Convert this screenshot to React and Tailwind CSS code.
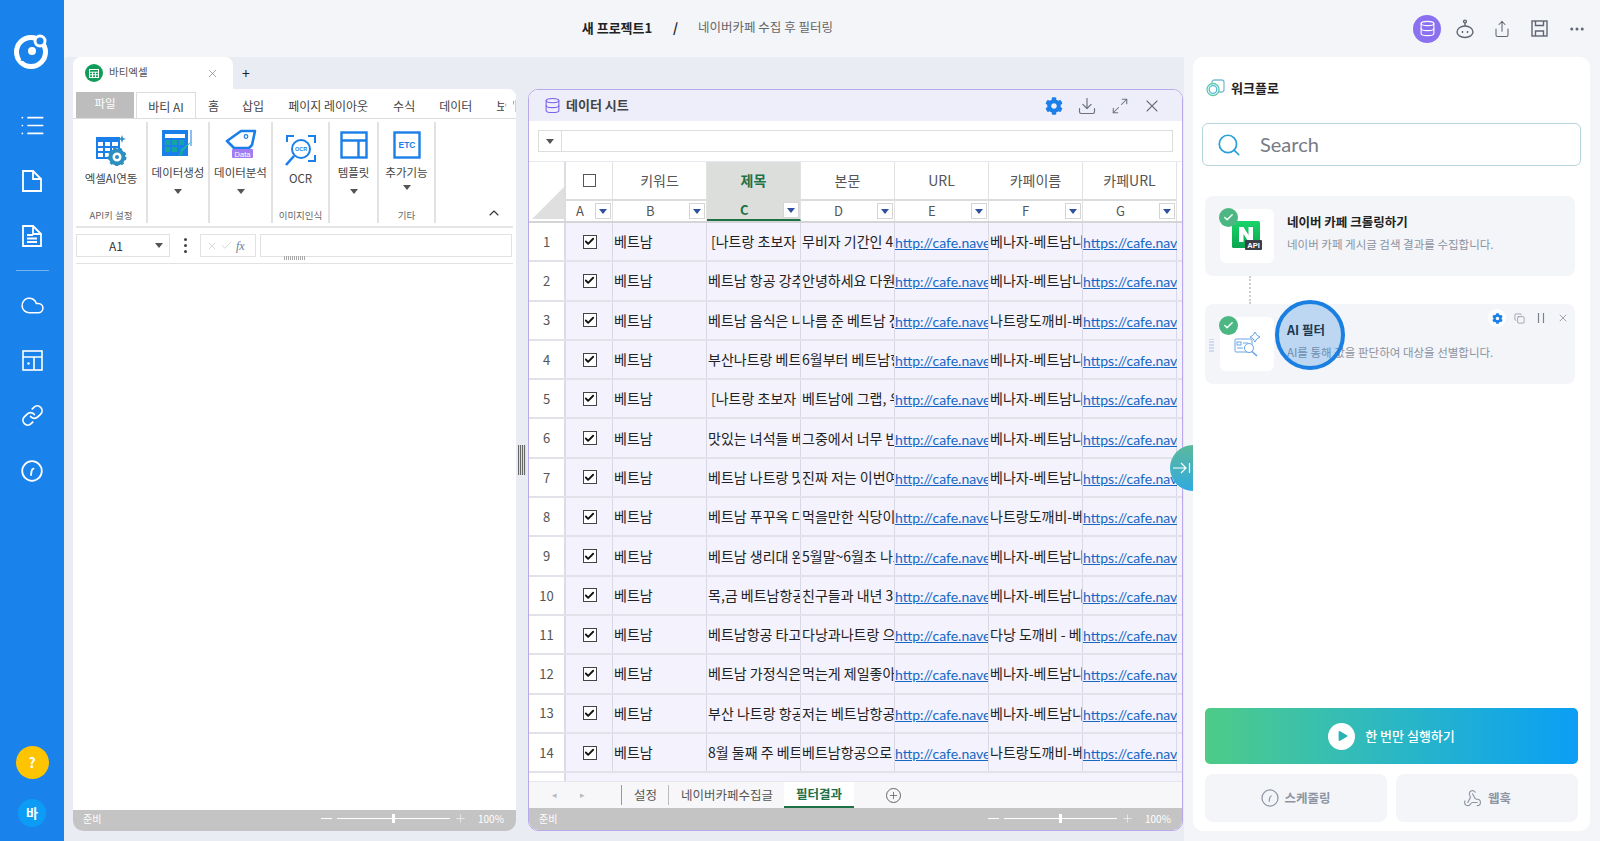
import React from 'react';
import { Database, Download, Maximize2, X, Search, Share, MoreHorizontal, Copy, Webhook, Cloud, Link as LinkIcon, List, Plus, ChevronUp, Check } from 'lucide-react';
import { FaCog, FaPlay } from 'react-icons/fa';

const rows = [
  ['[나트랑 초보자 : 여행 준비', '무비자 기간인 45일 동안', '베나자-베트남나트랑'],
  ['베트남 항공 강추합니다', '안녕하세요 다원입니다', '베나자-베트남나트랑'],
  ['베트남 음식은 나에게', '나름 준 베트남 전문가', '나트랑도깨비-베트남'],
  ['부산나트랑 베트남항공', '6월부터 베트남항공 노선', '베나자-베트남나트랑'],
  ['[나트랑 초보자 : 그랩', '베트남에 그랩, 우버', '베나자-베트남나트랑'],
  ['맛있는 녀석들 베트남', '그중에서 너무 반가운', '베나자-베트남나트랑'],
  ['베트남 나트랑 맛집', '진짜 저는 이번여행', '베나자-베트남나트랑'],
  ['베트남 푸꾸옥 다녀옴', '먹을만한 식당이 많아', '나트랑도깨비-베트남'],
  ['베트남 생리대 완전', '5월말~6월초 나트랑', '베나자-베트남나트랑'],
  ['목,금 베트남항공 출발', '친구들과 내년 3월에', '베나자-베트남나트랑'],
  ['베트남항공 타고 출발', '다낭과나트랑 으로', '다낭 도깨비 - 베트남'],
  ['베트남 가정식은 맛있어', '먹는게 제일좋아', '베나자-베트남나트랑'],
  ['부산 나트랑 항공권', '저는 베트남항공으로', '베나자-베트남나트랑'],
  ['8월 둘째 주 베트남', '베트남항공으로 다녀', '나트랑도깨비-베트남'],
];

const headers = [
  ['키워드', 'B'],
  ['제목', 'C'],
  ['본문', 'D'],
  ['URL', 'E'],
  ['카페이름', 'F'],
  ['카페URL', 'G'],
];

const Caret = ({ className = 'text-[#555]' }) => (
  <svg width="8" height="5" viewBox="0 0 8 5" className={className}><path d="M0 0h8L4 5z" fill="currentColor" /></svg>
);

const Logo = () => (
  <svg width="36" height="38" viewBox="0 0 36 38" fill="none">
    <circle cx="17" cy="20" r="14.5" stroke="#fff" strokeWidth="5" />
    <path d="M7 27c7 2 15-2 19-9" stroke="#1a82eb" strokeWidth="3" />
    <circle cx="18" cy="19" r="4" fill="#fff" />
    <circle cx="26" cy="9" r="6.5" fill="#fff" />
    <circle cx="26" cy="9" r="3.5" fill="#1a82eb" />
  </svg>
);

const FileIcon = ({ lines }) => (
  <svg width="22" height="24" viewBox="0 0 22 24" fill="none" stroke="#fff" strokeWidth="1.8">
    <path d="M2 2h10v8h8v12H2zM12 2l8 8" />
    {lines && <path d="M6 11h6M6 14.5h10M6 18h10" />}
  </svg>
);

const LayoutIcon = () => (
  <svg width="21" height="21" viewBox="0 0 21 21" fill="none" stroke="#fff" strokeWidth="1.6">
    <rect x="1" y="1" width="19" height="19" />
    <path d="M1 7h19M12 7v13" />
    <circle cx="6.5" cy="13.5" r="1.2" fill="#fff" stroke="none" />
  </svg>
);

const GaugeIcon = ({ size = 22, color = '#fff', sw = 1.8 }) => (
  <svg width={size} height={size} viewBox="0 0 22 22" fill="none" stroke={color} strokeWidth={sw}>
    <circle cx="11" cy="11" r="9.8" />
    <path d="M10 15l.6-4c.2-1 .8-2 2-2.4" strokeLinecap="round" />
  </svg>
);

const Sidebar = () => (
  <div className="w-16 shrink-0 bg-[#1a82eb] flex flex-col items-center text-white">
    <div className="mt-[32px] h-[38px] flex items-center justify-center"><Logo /></div>
    <div className="mt-[28px] flex flex-col items-center">
      <div className="h-[55px] flex items-center justify-center"><List size={27} strokeWidth={1.5} /></div>
      <div className="h-[55px] flex items-center justify-center"><FileIcon /></div>
      <div className="h-[55px] flex items-center justify-center"><FileIcon lines /></div>
      <div className="w-[33px] h-px bg-white/40 my-[7px]"></div>
      <div className="h-[55px] flex items-center justify-center"><Cloud size={25} strokeWidth={1.5} /></div>
      <div className="h-[55px] flex items-center justify-center"><LayoutIcon /></div>
      <div className="h-[55px] flex items-center justify-center"><LinkIcon size={23} strokeWidth={1.8} /></div>
      <div className="h-[55px] flex items-center justify-center"><GaugeIcon /></div>
    </div>
    <div className="mt-auto mb-[14px] flex flex-col items-center gap-[20px]">
      <div className="w-[33px] h-[33px] rounded-full bg-[#ffc400] flex items-center justify-center text-[14px] font-bold">?</div>
      <div className="w-[28px] h-[28px] rounded-full bg-[#0c9cf5] flex items-center justify-center text-[13px] font-bold">바</div>
    </div>
  </div>
);

const TopBar = () => (
  <div className="h-[57px] shrink-0 flex items-center relative">
    <div className="flex items-center absolute left-[506px] top-[18px]">
      <span className="text-[13px] font-bold text-[#222] w-[94px] text-center">새 프로젝트1</span>
      <span className="ml-[9px] text-[13px] font-bold text-[#222]">/</span>
      <span className="ml-[20px] text-[12.5px] text-[#666]">네이버카페 수집 후 필터링</span>
    </div>
    <div className="ml-auto mr-[9px] flex items-center gap-[9.5px] text-[#5f6672]">
      <div className="w-[28px] h-[28px] rounded-full bg-[#8b71f0] flex items-center justify-center text-white"><Database size={17} strokeWidth={1.6} /></div>
      <div className="w-[28px] flex justify-center">
        <svg width="18" height="20" viewBox="0 0 18 20" fill="none" stroke="#5f6672" strokeWidth="1.4">
          <circle cx="9" cy="2.5" r="1.4" /><path d="M9 4v3" />
          <path d="M1 13a8 6 0 0116 0 8 5.5 0 01-16 0z" />
          <path d="M6.5 12v2M11.5 12v2" />
        </svg>
      </div>
      <div className="w-[28px] flex justify-center"><Share size={18} strokeWidth={1.4} /></div>
      <div className="w-[28px] flex justify-center">
        <svg width="17" height="17" viewBox="0 0 17 17" fill="none" stroke="#5f6672" strokeWidth="1.4">
          <rect x="1" y="1" width="15" height="15" /><path d="M4.5 1v4.5h8V1M4.5 16v-5h8v5" />
        </svg>
      </div>
      <div className="w-[28px] flex justify-center"><MoreHorizontal size={18} strokeWidth={2} /></div>
    </div>
  </div>
);

const StatusBar = ({ barClass }) => (
  <div className={`shrink-0 bg-[#c4c4c4] flex items-center text-white text-[10px] ${barClass}`}>
    <span>준비</span>
    <div className="ml-auto flex items-center">
      <span className="w-[11px] h-px bg-white"></span>
      <div className="ml-[5px] w-[113px] h-px bg-white flex items-center justify-center">
        <span className="w-[3px] h-[9px] bg-white"></span>
      </div>
      <Plus size={13} strokeWidth={1} className="ml-[4px]" />
      <span className="ml-[11px] w-[25px]">100%</span>
    </div>
  </div>
);

const ExcelAiIcon = () => (
  <svg width="32" height="32" viewBox="0 0 32 32" fill="none">
    <rect x="1" y="3" width="24" height="22" fill="#1a7fe8" />
    <path d="M3 8h20v15H3z" fill="#fff" />
    <path d="M3 13h20M3 18h20M9 8v15M16 8v15" stroke="#1a7fe8" strokeWidth="2" />
    <circle cx="22" cy="23" r="6.5" fill="#fff" stroke="#2b8fbf" strokeWidth="4" />
    <circle cx="22" cy="23" r="8.5" stroke="#2b8fbf" strokeWidth="2" strokeDasharray="3 3" />
    <circle cx="22" cy="23" r="2" fill="#2b8fbf" />
    <path d="M27 1l1 3 3 1-3 1-1 3-1-3-3-1 3-1z" fill="#2b8fbf" />
  </svg>
);

const DataGenIcon = () => (
  <svg width="32" height="30" viewBox="0 0 32 30" fill="none">
    <rect x="0" y="1" width="26" height="26" fill="#1a7fe8" />
    <path d="M3 5h20v4H3z" fill="#fff" />
    <path d="M3 11h5v5H3zM10 11h5v5h-5zM17 11h5v5h-5zM3 18h5v5H3zM10 18h5v5h-5z" fill="#14a5a0" />
    <path d="M29 1v16" stroke="#1a7fe8" />
    <path d="M30 12L20 23l-2-2z" fill="#14b8a0" />
    <path d="M20 22c-2 0-3 2-4 5 3 0 5-1 5-3z" fill="#14a5a0" />
  </svg>
);

const DataTagIcon = () => (
  <svg width="32" height="30" viewBox="0 0 32 30" fill="none">
    <path d="M2 12L16 2h14l-3 14-3 3H9z" stroke="#1a7fe8" strokeWidth="2.6" strokeLinejoin="round" />
    <circle cx="21" cy="7.5" r="1.8" stroke="#1a7fe8" strokeWidth="1.2" />
    <rect x="7" y="20" width="21" height="9" rx="1" fill="#a27cf2" />
    <text x="17.5" y="27.5" fontSize="7.5" fill="#fff" textAnchor="middle" fontFamily="Liberation Sans, sans-serif">Data</text>
  </svg>
);

const OcrIcon = () => (
  <svg width="32" height="32" viewBox="0 0 32 32" fill="none" stroke="#1a7fe8" strokeWidth="2">
    <path d="M2 8V2h7M23 2h7v7M30 21v6h-7" />
    <circle cx="16" cy="15" r="9" />
    <path d="M9 22l-8 9" strokeWidth="2.6" />
    <text x="16" y="17" fontSize="5.5" fill="#1a7fe8" stroke="none" textAnchor="middle" fontWeight="700" fontFamily="Liberation Sans, sans-serif">OCR</text>
  </svg>
);

const TemplateIcon = () => (
  <svg width="28" height="28" viewBox="0 0 28 28" fill="none" stroke="#1a7fe8" strokeWidth="2.4">
    <rect x="1.5" y="1.5" width="25" height="25" />
    <path d="M1.5 9.5h25M18.5 9.5v17" />
  </svg>
);

const EtcIcon = () => (
  <svg width="28" height="28" viewBox="0 0 28 28" fill="none" stroke="#1a7fe8" strokeWidth="2.4">
    <rect x="1.5" y="1.5" width="25" height="25" />
    <text x="14" y="17" fontSize="8.5" fill="#1a7fe8" stroke="none" textAnchor="middle" fontWeight="700" fontFamily="Liberation Sans, sans-serif">ETC</text>
  </svg>
);

const RibbonGroup = ({ width, icon, label, caret, group, top = 'pt-[5px]', labelClass = 'mt-[5px]', caretClass = 'mt-[8px]' }) => (
  <div className="shrink-0 h-full flex py-[3px]" style={{ width }}>
    <div className={`flex-1 flex flex-col items-center ${top}`}>
      <div className="h-[32px] flex items-end justify-center">{icon}</div>
      <div className={`text-[11.5px] leading-[17px] text-[#444] whitespace-nowrap ${labelClass}`}>{label}</div>
      {caret && <div className={`${caretClass} leading-none flex`}><Caret /></div>}
      {group && <div className="mt-auto mb-[1px] text-[9.5px] text-[#666] leading-[14px]">{group}</div>}
    </div>
    <div className="w-[2px] h-full bg-[#e2e2e2]"></div>
  </div>
);

const ribbonTabClass = 'shrink-0 h-[27px] pt-[3px] flex items-center whitespace-nowrap';

const LeftPanel = () => (
  <div className="w-[443px] shrink-0 flex flex-col">
    <div className="h-[32px] shrink-0 flex items-center">
      <div className="w-[160px] h-full bg-white rounded-t-[8px] flex items-center pl-[12px]">
        <span className="w-[18px] h-[18px] rounded-full bg-[#0f9d58] flex items-center justify-center">
          <svg width="10" height="9" viewBox="0 0 10 9" fill="none" stroke="#fff" strokeWidth="1"><rect x=".5" y=".5" width="9" height="8" /><path d="M.5 3.2h9M.5 5.8h9M3.5 3.2v5.3M6.5 3.2v5.3" /></svg>
        </span>
        <span className="ml-[6px] pb-[3px] text-[10.5px] text-[#555]">바티엑셀</span>
        <X size={13} strokeWidth={1.2} className="ml-auto mr-[14px] text-[#777]" />
      </div>
      <span className="ml-[9px] text-[14px] text-[#222]">+</span>
    </div>
    <div className="flex-1 bg-white rounded-b-[10px] rounded-tr-[8px] flex flex-col min-h-0 overflow-hidden">
      <div className="px-[3px] pt-[3px] h-[30px] shrink-0 flex items-end border-b border-[#ddd] text-[12px] text-[#444] relative overflow-hidden">
        <div className="w-[58px] shrink-0 h-full bg-[#bdbdbd] text-white text-[11.5px] flex items-center justify-center pb-[3px]">파일</div>
        <div className="ml-[2px] w-[60px] shrink-0 h-[26px] pt-[2px] bg-white border border-b-0 border-[#ddd] flex items-center justify-center">바티 AI</div>
        <div className={`ml-[12px] ${ribbonTabClass}`}>홈</div>
        <div className={`ml-[23px] ${ribbonTabClass}`}>삽입</div>
        <div className={`ml-[24px] ${ribbonTabClass}`}>페이지 레이아웃</div>
        <div className={`ml-[25px] ${ribbonTabClass}`}>수식</div>
        <div className={`ml-[24px] ${ribbonTabClass}`}>데이터</div>
        <div className={`ml-[24px] ${ribbonTabClass}`}>보기</div>
        <div className="absolute right-[3px] top-[3px] w-[9px] h-[26px] bg-white text-[9px] text-[#999] flex items-center">›</div>
      </div>
      <div className="h-[109px] shrink-0 mx-[3px] border-b-2 border-[#e6e6e6] flex">
        <RibbonGroup width={72} icon={<ExcelAiIcon />} label="엑셀AI연동" group="API키 설정" top="pt-[12px]" labelClass="mt-[4px]" />
        <RibbonGroup width={62} icon={<DataGenIcon />} label="데이터생성" caret />
        <RibbonGroup width={63} icon={<DataTagIcon />} label="데이터분석" caret />
        <RibbonGroup width={57} icon={<OcrIcon />} label="OCR" group="이미지인식" top="pt-[12px]" labelClass="mt-[4px]" />
        <RibbonGroup width={49} icon={<TemplateIcon />} label="템플릿" caret />
        <RibbonGroup width={57} icon={<EtcIcon />} label="추가기능" caret group="기타" caretClass="mt-[4px]" />
        <div className="flex-1 flex items-end justify-end pr-[11px] pb-[5px]"><ChevronUp size={16} strokeWidth={1.6} className="text-[#333]" /></div>
      </div>
      <div className="h-[36px] shrink-0 mx-[3px] pt-[6px] flex items-start relative border-b border-[#e2e2e2]">
        <div className="w-[94px] h-[23px] border border-[#e2e2e2] flex items-center text-[12px] text-[#333] pl-[32px]">
          <span>A1</span>
          <span className="ml-auto mr-[6px] flex"><Caret /></span>
        </div>
        <div className="w-[30px] h-[23px] flex flex-col items-center justify-center gap-[3px]">
          <span className="w-[3px] h-[3px] rounded-full bg-[#444]"></span>
          <span className="w-[3px] h-[3px] rounded-full bg-[#444]"></span>
          <span className="w-[3px] h-[3px] rounded-full bg-[#444]"></span>
        </div>
        <div className="w-[56px] h-[23px] border border-[#e2e2e2] flex items-center pl-[5px] gap-[2px] text-[#ccc]">
          <X size={12} strokeWidth={1.4} />
          <Check size={13} strokeWidth={1.4} />
          <span className="ml-[1px] text-[12px] italic text-[#6a7a96] font-['Liberation_Serif',serif]">fx</span>
        </div>
        <div className="ml-[4px] w-[252px] h-[23px] border border-[#e2e2e2]"></div>
        <div className="absolute left-[208px] bottom-[3px] w-[22px] h-[4px] bg-[repeating-linear-gradient(90deg,#aaa_0,#aaa_1px,transparent_1px,transparent_2px)]"></div>
      </div>
      <div className="flex-1"></div>
      <StatusBar barClass="h-[21px] pl-[10px] pr-[13px] pb-[5px]" />
    </div>
  </div>
);

const CheckBox = ({ checked }) => (
  <span className="w-[14px] h-[14px] border-[1.5px] border-[#444] bg-white flex items-center justify-center">
    {checked && <Check size={11} strokeWidth={4} className="text-[#111]" />}
  </span>
);

const FilterBtn = () => (
  <span className="w-[16px] h-[16px] border border-[#d5d5d5] bg-white flex items-center justify-center"><Caret className="text-[#2f4f9f]" /></span>
);

const colClass = 'w-[94px] shrink-0 border-r border-[#d9d9e6] whitespace-nowrap bg-[#f3f2fd] flex items-center text-[14px]';
const linkClass = "text-[#1668c4] underline pt-[2px] font-['Lato',sans-serif]";

const DataRow = ({ num, row }) => (
  <div className="h-[39.3px] shrink-0 flex items-stretch border-b-2 border-[#e2e2ea]">
    <div className="w-[37px] shrink-0 bg-white border-r-2 border-[#dcdce2] flex items-center justify-center text-[13px] text-[#555]">{num}</div>
    <div className="w-[47px] shrink-0 bg-[#f3f2fd] border-r border-[#d9d9e6] pl-[1px] flex items-center justify-center"><CheckBox checked /></div>
    <div className={`${colClass} overflow-hidden pl-[1px] text-[#222]`}>베트남</div>
    <div className={`${colClass} overflow-hidden text-[#222] ${row[0].startsWith('[') ? 'pl-[4px]' : 'pl-[1px]'}`}>{row[0]}</div>
    <div className={`${colClass} overflow-hidden pl-[1px] text-[#222]`}>{row[1]}</div>
    <div className={`${colClass} overflow-hidden ${linkClass}`}>http://cafe.naver.com/</div>
    <div className={`${colClass} overflow-hidden pl-[1px] text-[#222]`}>{row[2]}</div>
    <div className={`${colClass} ${linkClass}`}>https://cafe.naveh.com/</div>
    <div className="flex-1 bg-[#f3f2fd]"></div>
  </div>
);

const Sheet = () => (
  <div className="flex-1 min-h-0 flex flex-col overflow-hidden">
    <div className="h-[37px] shrink-0 flex items-stretch relative">
      <svg width="38" height="32" viewBox="0 0 38 32" className="absolute left-0 top-[25px] z-10"><path d="M3 32L35 0v32z" fill="#dfdfdf" /></svg>
      <div className="w-[37px] shrink-0 border-r-2 border-[#dcdce2]"></div>
      <div className="w-[47px] shrink-0 border-r border-[#e2e2e2] flex items-center justify-center"><span className="w-[13px] h-[13px] border-[1.5px] border-[#555] bg-white"></span></div>
      {headers.map(([name]) => (
        <div key={name} className={`w-[94px] shrink-0 border-r border-[#e2e2e2] flex items-center justify-center text-[14px] ${name === '제목' ? 'bg-[#dcdedc] text-[#1e7145] font-bold' : 'text-[#555]'}`}>{name}</div>
      ))}
    </div>
    <div className="h-[24px] shrink-0 flex items-stretch border-b-2 border-[#d5d5d8]">
      <div className="w-[37px] shrink-0 border-r-2 border-[#dcdce2]"></div>
      <div className="w-[47px] shrink-0 border-r border-[#e2e2e2] border-t-2 border-t-[#dcdcdc] flex items-center justify-between pl-[10px] pr-[1px] text-[13px] text-[#555]">A<FilterBtn /></div>
      {headers.map(([name, col]) => (
        <div key={col} className={`w-[94px] shrink-0 border-r border-[#e2e2e2] border-t-2 border-t-[#dcdcdc] flex items-center pl-[33px] pr-[1px] justify-between text-[13px] ${col === 'C' ? 'bg-[#dcdedc] text-[#1e7145] font-bold border-b-2 border-b-[#1e7145]' : 'text-[#555]'}`}>{col}<FilterBtn /></div>
      ))}
    </div>
    {rows.map((row, i) => <DataRow key={i} num={i + 1} row={row} />)}
    <div className="flex-1 flex items-stretch">
      <div className="w-[37px] shrink-0 bg-white border-r-2 border-[#dcdce2]"></div>
      <div className="flex-1 bg-[#f3f2fd]"></div>
    </div>
  </div>
);

const SheetTabs = () => (
  <div className="h-[27px] shrink-0 flex items-center bg-[#f7f7fa] border-t border-[#e6e6ee] text-[12.5px] text-[#555] relative">
    <span className="ml-[23px] text-[9px] text-[#bbb]">◂</span>
    <span className="ml-[23px] text-[9px] text-[#bbb]">▸</span>
    <span className="ml-[36px] w-px h-[20px] bg-[#999]"></span>
    <span className="ml-[12px] w-[22px] whitespace-nowrap">설정</span>
    <span className="ml-[12px] w-px h-[20px] bg-[#bbb]"></span>
    <span className="ml-[12px] whitespace-nowrap">네이버카페수집글</span>
    <span className="ml-[11px] w-[70px] h-full bg-white border-b-2 border-[#1e7145] text-[#1e7145] font-bold flex items-center justify-center">필터결과</span>
    <span className="ml-[32px] w-[15px] h-[15px] rounded-full border border-[#666] flex items-center justify-center"><Plus size={11} strokeWidth={1.6} /></span>
  </div>
);

const DataPanel = () => (
  <div className="w-[655px] shrink-0 mt-[32px] flex flex-col rounded-[10px] border border-[#b9a8ec] overflow-hidden bg-white">
    <div className="h-[31px] shrink-0 bg-[#eeeefb] flex items-center pl-[15px] text-[#7b61e8]">
      <Database size={17} strokeWidth={1.5} />
      <span className="ml-[5px] pb-[2px] text-[13px] font-bold text-[#444]">데이터 시트</span>
      <div className="ml-auto flex items-center mr-[20px] text-[#6b7180]">
        <FaCog size={18} className="text-[#1a7fe8]" />
        <Download size={20} strokeWidth={1.4} className="ml-[14px]" />
        <Maximize2 size={18} strokeWidth={1.4} className="ml-[14px]" />
        <X size={20} strokeWidth={1.3} className="ml-[13px]" />
      </div>
    </div>
    <div className="h-[41px] shrink-0 flex items-center px-[9px] border-b border-[#e8e8ee]">
      <div className="w-[24px] h-[22px] border border-[#ddd] flex items-center justify-center"><Caret /></div>
      <div className="flex-1 h-[22px] border border-l-0 border-[#ddd]"></div>
    </div>
    <Sheet />
    <SheetTabs />
    <StatusBar barClass="h-[22px] pl-[10px] pr-[12px] pb-[2px]" />
  </div>
);

const Badge = () => (
  <span className="absolute left-[14px] top-[12px] w-[19px] h-[19px] rounded-full bg-[#4cb782] flex items-center justify-center text-white"><Check size={11} strokeWidth={3} /></span>
);

const NaverIcon = () => (
  <svg width="31" height="30" viewBox="0 0 31 30" fill="none">
    <defs><linearGradient id="nv" x1="0" y1="0" x2="0" y2="1"><stop offset="0" stopColor="#19d46a" /><stop offset="1" stopColor="#0aa64f" /></linearGradient></defs>
    <rect x="0" y="0" width="28" height="27" rx="1.5" fill="url(#nv)" />
    <path d="M7 6h4.5l5 8V6H21v15h-4.5l-5-8v8H7z" fill="#fff" />
    <rect x="13" y="19" width="17" height="10" rx="1" fill="#3c3f48" />
    <text x="21.5" y="27" fontSize="7.5" fontWeight="700" fill="#fff" textAnchor="middle" fontFamily="Liberation Sans, sans-serif">API</text>
  </svg>
);

const FilterIcon = () => (
  <svg width="26" height="26" viewBox="0 0 26 26" fill="none" stroke="#6aa5ea" strokeWidth="1">
    <rect x="1" y="8" width="17" height="13" rx="1" />
    <rect x="3" y="11" width="4" height="3" /><path d="M9 12h5M3 17h6" />
    <circle cx="15" cy="17" r="4.5" fill="#fff" /><path d="M18 20.5l5 4.5" strokeWidth="1.6" />
    <path d="M21 1l1.8 3.2L26 6l-3.2 1.8L21 11l-1.8-3.2L16 6l3.2-1.8z" fill="#fff" />
  </svg>
);

const FlowCard = ({ icon, title, desc, children, grip }) => (
  <div className="h-[80px] shrink-0 bg-[#f3f5f9] rounded-[8px] relative flex items-center pl-[15px]">
    <div className="w-[54px] h-[54px] bg-white rounded-[6px] flex items-center justify-center">{icon}</div>
    <Badge />
    <div className="ml-[13px] pb-[6px] flex flex-col gap-[5px]">
      <div className="text-[12.5px] leading-[18px] font-bold text-[#222]">{title}</div>
      <div className="text-[11.5px] leading-[17px] text-[#8b93a1]">{desc}</div>
    </div>
    {grip && <div className="absolute left-[4px] top-[35px] w-[5px] h-[13px] bg-[repeating-linear-gradient(0deg,#cfdcf0_0,#cfdcf0_2px,transparent_2px,transparent_3px)]"></div>}
    {children}
  </div>
);

const RightPanel = () => (
  <div className="w-[397px] shrink-0 ml-[9px] mb-[10px] bg-white rounded-[10px] flex flex-col px-[9px] relative">
    <div className="h-[60px] mb-[6px] shrink-0 flex items-center pl-[4px] pt-[2px]">
      <svg width="19" height="18" viewBox="0 0 19 18" fill="none" strokeWidth="1.3">
        <rect x="6" y="1" width="12" height="12" rx="2.5" stroke="#7dbcd8" />
        <circle cx="7" cy="10.5" r="6" stroke="#5dcba8" fill="#fff" />
        <circle cx="7" cy="10.5" r="3.8" stroke="#58b9d6" />
      </svg>
      <span className="ml-[6px] text-[13px] font-bold text-[#222]">워크플로</span>
    </div>
    <div className="h-[43px] shrink-0 border border-[#b5d3dc] rounded-[6px] flex items-center pl-[13px]">
      <Search size={26} strokeWidth={1.6} className="text-[#2a9fd8]" />
      <span className="ml-[18px] pb-[2px] text-[20px] text-[#767b84] font-['Lato',sans-serif]">Search</span>
    </div>
    <div className="mt-[30px] ml-[3px] mr-[6px] flex flex-col">
      <FlowCard icon={<NaverIcon />} title="네이버 카페 크롤링하기" desc="네이버 카페 게시글 검색 결과를 수집합니다." />
      <div className="h-[28px] ml-[44px] border-l-2 border-dotted border-[#ccc]"></div>
      <FlowCard icon={<FilterIcon />} title="AI 필터" desc="AI를 통해 값을 판단하여 대상을 선별합니다." grip>
        <div className="absolute right-[6px] top-[5px] flex items-center text-[#7a808c]">
          <span className="w-[18px] h-[18px] rounded-full bg-white flex items-center justify-center"><FaCog size={11} className="text-[#1a7fe8]" /></span>
          <Copy size={11} strokeWidth={1.4} className="ml-[8px]" />
          <svg width="12" height="12" viewBox="0 0 12 12" fill="none" stroke="currentColor" strokeWidth="1.2" className="ml-[10px]"><path d="M3.5 1v10M8.5 1v10" /></svg>
          <X size={12} strokeWidth={1.4} className="ml-[10px]" />
        </div>
      </FlowCard>
    </div>
    <div className="mt-auto ml-[3px] mr-[3px] mb-[9px] flex flex-col gap-[10px]">
      <div className="h-[56px] rounded-[5px] bg-gradient-to-r from-[#4ecb87] to-[#0b9ef5] flex items-center justify-center text-white text-[13px] font-medium">
        <span className="w-[27px] h-[27px] rounded-full bg-white flex items-center justify-center text-[#25b3b5] pl-[2px]"><FaPlay size={10} /></span>
        <span className="ml-[10px]">한 번만 실행하기</span>
      </div>
      <div className="flex gap-[9px]">
        <div className="flex-1 h-[48px] rounded-[8px] bg-[#f3f5f9] flex items-center justify-center text-[12.5px] font-semibold text-[#8e94a2]">
          <GaugeIcon size={18} color="#8e94a2" sw={1.5} />
          <span className="ml-[5px]">스케줄링</span>
        </div>
        <div className="flex-1 h-[48px] rounded-[8px] bg-[#f3f5f9] flex items-center justify-center text-[12.5px] font-semibold text-[#8e94a2]">
          <Webhook size={19} strokeWidth={1.4} />
          <span className="ml-[6px]">웹훅</span>
        </div>
      </div>
    </div>
  </div>
);

export default function App() {
  return (
    <div className="w-[1600px] h-[841px] flex overflow-hidden bg-[#f3f5f9] font-['Noto_Sans_CJK_KR','Noto_Sans',sans-serif]">
      <Sidebar />
      <div className="flex-1 min-w-0 flex flex-col">
        <TopBar />
        <div className="flex-1 min-h-0 flex relative">
          <div className="w-[1120px] shrink-0 bg-[#e9edf3] flex pl-[9px] pb-[10px] rounded-tl-[4px]">
            <LeftPanel />
            <div className="w-[12px] shrink-0 flex justify-center pt-[388px]">
              <div className="w-[8px] h-[30px] bg-[repeating-linear-gradient(90deg,#666_0,#666_1px,#ddd_1px,#ddd_2px)]"></div>
            </div>
            <DataPanel />
          </div>
          <RightPanel />
          {/* 패널 접기 버튼 */}
          <div className="absolute left-[1106px] top-[388px] w-[23px] h-[46px] rounded-l-full bg-gradient-to-b from-[#5bb89a] to-[#2fa9e0] flex items-center justify-center text-white">
            <svg width="18" height="12" viewBox="0 0 18 12" fill="none" stroke="#fff" strokeWidth="1.2"><path d="M0 6h12M8 1l5 5-5 5M16.5 1v10" /></svg>
          </div>
          {/* 튜토리얼 하이라이트 */}
          <div className="absolute left-[1211px] top-[243px] w-[70px] h-[70px] rounded-full border-[4px] border-[#1a7fe0] bg-[#1a7fe0]/25"></div>
        </div>
      </div>
    </div>
  );
}
